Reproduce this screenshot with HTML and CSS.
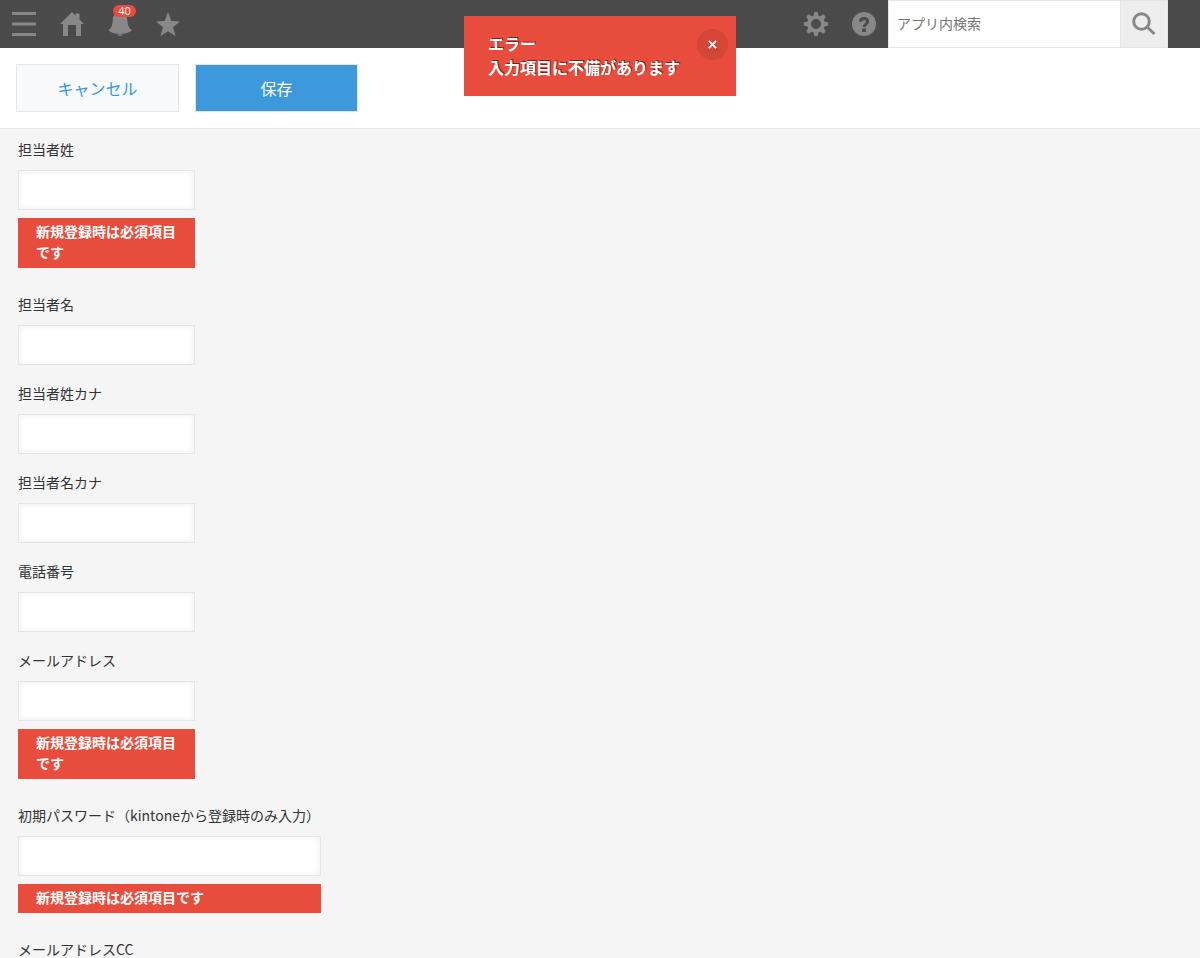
FILE: index.html
```html
<!DOCTYPE html>
<html lang="ja">
<head>
  <meta charset="UTF-8" />
  <meta name="viewport" content="width=device-width, initial-scale=1.0"/>
  <title>レコードの追加</title>
  <link rel="stylesheet" href="styles.css">
</head>
<body>
  <header class="header">
    <nav class="header-nav">
      <button class="icon-btn" type="button" aria-label="メニュー">
        <svg viewBox="0 0 24 24"><path d="M0 0h24v3H0zM0 10.500h24v3H0zM0 21h24v3H0z"/></svg>
      </button>
      <a class="icon-btn" href="#" aria-label="ポータル">
        <svg viewBox="0 0 24 24"><path d="M12 0l3.500 3.500V1.500h4v6L24 12h-3v12h-5V13H8v11H3V12H0z"/></svg>
      </a>
      <button class="icon-btn" type="button" aria-label="通知">
        <svg viewBox="0 0 24 24"><path d="M12 0c5 0 7 3.500 7.300 8 .3 4.500 1 7.500 4.700 10.500C21 20.800 16.500 22 12 22S3 20.800 0.500 18.500C4 15.500 4.500 12.500 4.800 8 5 3.500 7 0 12 0zM9 22.300q3 .4 6 0Q14 24 12 24t-3-1.700z"/></svg>
        <span class="badge">40</span>
      </button>
      <button class="icon-btn" type="button" aria-label="ブックマーク">
        <svg viewBox="0 0 24 24"><path d="M12 0l3.200 8.800 8.800.8-7 5.600L19.500 24 12 19.200 4.500 24 7 15.200 0 9.600l8.800-.8z"/></svg>
      </button>
    </nav>

    <div class="header-tools">
      <button class="icon-btn" type="button" aria-label="設定">
        <svg viewBox="0 0 24 24"><path fill-rule="evenodd" d="M10.300 0h3.400l.6 3.400 2.200.9 2.900-2 2.400 2.400-2 2.900.9 2.100 3.300.6v3.400l-3.300.6-.9 2.200 2 2.800-2.400 2.400-2.900-2-2.200.9-.6 3.400h-3.400l-.6-3.400-2.200-.9-2.900 2-2.400-2.400 2-2.800-.9-2.200L0 13.700v-3.400l3.300-.6.9-2.100-2-2.900 2.400-2.400 2.900 2 2.200-.9zM12 7a5 5 0 1 0 0 10 5 5 0 0 0 0-10z"/></svg>
      </button>
      <button class="icon-btn" type="button" aria-label="ヘルプ">
        <svg viewBox="0 0 24 24"><circle cx="12" cy="12" r="12"/><path class="mark" d="M8.500 9.700C8.500 7.500 10 6.500 12 6.500s3.600 1 3.600 3c0 2.600-3.500 2.600-3.500 5.500"/><path class="dot" d="M10.200 16.500h3.700v3.500h-3.700z"/></svg>
      </button>
      <form class="search">
        <input class="search-input" type="text" placeholder="アプリ内検索" aria-label="アプリ内検索">
        <button class="search-btn" type="button" aria-label="検索">
          <svg viewBox="0 0 24 24"><circle cx="9.500" cy="9.500" r="7.800"/><path d="M15 15l7.500 7"/></svg>
        </button>
      </form>
    </div>
  </header>

  <div class="toast" role="alert">
    <p class="toast-text">エラー<br>入力項目に不備があります</p>
    <button class="toast-close" type="button" aria-label="閉じる">
      <svg viewBox="0 0 10 10"><path d="M1 1l8 8M9 1l-8 8"/></svg>
    </button>
  </div>

  <div class="actions">
    <button class="btn" type="button">キャンセル</button>
    <button class="btn btn-save" type="submit" form="record">保存</button>
  </div>

  <main class="content">
    <form id="record">
      <div class="field">
        <label for="lastName">担当者姓</label>
        <input type="text" id="lastName">
        <p class="error">新規登録時は必須項目です</p>
      </div>
      <div class="field">
        <label for="firstName">担当者名</label>
        <input type="text" id="firstName">
      </div>
      <div class="field">
        <label for="lastKana">担当者姓カナ</label>
        <input type="text" id="lastKana">
      </div>
      <div class="field">
        <label for="firstKana">担当者名カナ</label>
        <input type="text" id="firstKana">
      </div>
      <div class="field">
        <label for="tel">電話番号</label>
        <input type="text" id="tel">
      </div>
      <div class="field">
        <label for="mail">メールアドレス</label>
        <input type="text" id="mail">
        <p class="error">新規登録時は必須項目です</p>
      </div>
      <div class="field field-wide">
        <label for="password">初期パスワード（kintoneから登録時のみ入力）</label>
        <input type="text" id="password">
        <p class="error">新規登録時は必須項目です</p>
      </div>
      <div class="field">
        <label for="mailCc">メールアドレスCC</label>
        <input type="text" id="mailCc">
      </div>
    </form>
  </main>
</body>
</html>
```
FILE: styles.css
```css
* {
  box-sizing: border-box;
}

body {
  display: flex;
  flex-direction: column;
  height: 100vh;
  margin: 0;
  font-family: "Noto Sans CJK JP", sans-serif;
  font-size: 14px;
  line-height: 20px;
  color: #333;
  background-color: #f5f5f5;
}

button, input {
  font-family: inherit;
}

button {
  padding: 0;
  border: none;
  cursor: pointer;
}

p {
  margin: 0;
}

/* === Header === */
.header {
  display: flex;
  flex-shrink: 0;
  justify-content: space-between;
  height: 48px;
  padding-right: 32px;
  background-color: #4b4b4b;
}

.header-nav, .header-tools, .search {
  display: flex;
}

.icon-btn {
  position: relative;
  display: flex;
  align-items: center;
  justify-content: center;
  width: 48px;
  height: 48px;
  background: none;
}

.icon-btn svg {
  width: 24px;
  height: 24px;
  fill: #888;
}

.icon-btn .mark {
  fill: none;
  stroke: #4b4b4b;
  stroke-width: 3;
}

.icon-btn .dot {
  fill: #4b4b4b;
}

.badge {
  position: absolute;
  top: 5px;
  left: 17px;
  width: 23px;
  border-radius: 6px;
  font-family: "Open Sans", sans-serif;
  font-size: 11px;
  line-height: 12px;
  color: #fff;
  background-color: #e74c3c;
}

.search-input {
  width: 233px;
  padding: 0 8px 2px;
  border: 1px solid #e3e7e8;
  border-radius: 0;
  font-size: 14px;
  background-color: #fff;
}

.search-input::placeholder {
  color: #757575;
}

.search-btn {
  display: flex;
  align-items: center;
  justify-content: center;
  width: 47px;
  border: solid #e3e7e8;
  border-width: 1px 1px 1px 0;
  background-color: #eee;
}

.search-btn svg {
  width: 24px;
  height: 24px;
  fill: none;
  stroke: #888;
  stroke-width: 3;
}

/* === Error toast === */
.toast {
  position: fixed;
  top: 16px;
  left: 50%;
  transform: translateX(-50%);
  display: flex;
  gap: 17px;
  padding: 15px 8px 17px 24px;
  color: #fff;
  background-color: #e74c3c;
}

.toast-text {
  font-size: 16px;
  font-weight: bold;
  line-height: 24px;
  white-space: nowrap;
  text-shadow: 1px -1px 0 rgba(0, 0, 0, 0.5);
}

.toast-close {
  display: flex;
  align-items: center;
  justify-content: center;
  width: 31px;
  height: 31px;
  margin-top: -2px;
  border-radius: 50%;
  background-color: #d44637;
}

.toast-close svg {
  width: 9px;
  height: 9px;
  stroke: #fff;
  stroke-width: 2;
}

/* === Buttons === */
.actions {
  display: flex;
  flex-shrink: 0;
  gap: 16px;
  padding: 16px;
  border-bottom: 1px solid #e3e7e8;
  background-color: #fff;
}

.btn {
  width: 163px;
  height: 48px;
  border: 1px solid #e3e7e8;
  font-size: 16px;
  color: #3498db;
  background-color: #f7f9fa;
}

.btn-save {
  color: #fff;
  background-color: #3d98dc;
}

/* === Form === */
.content {
  flex: 1;
  min-height: 0;
  padding: 10px 18px;
  overflow-y: auto;
  scrollbar-width: none;
}

.field {
  width: 177px;
  margin-bottom: 18px;
}

.field-wide {
  width: 303px;
}

.field label {
  display: block;
  margin-bottom: 11px;
  white-space: nowrap;
}

.field input {
  display: block;
  width: 100%;
  height: 40px;
  padding: 0 8px;
  border: 1px solid #e3e7e8;
  font-size: 14px;
  background-color: #fff;
  box-shadow: 2px 2px 4px #f5f5f5 inset, -2px -2px 4px #f5f5f5 inset;
}

.error {
  margin: 8px 0 26px;
  padding: 3px 18px 5px;
  font-weight: bold;
  line-height: 21px;
  color: #fff;
  background-color: #e74c3c;
}
```
